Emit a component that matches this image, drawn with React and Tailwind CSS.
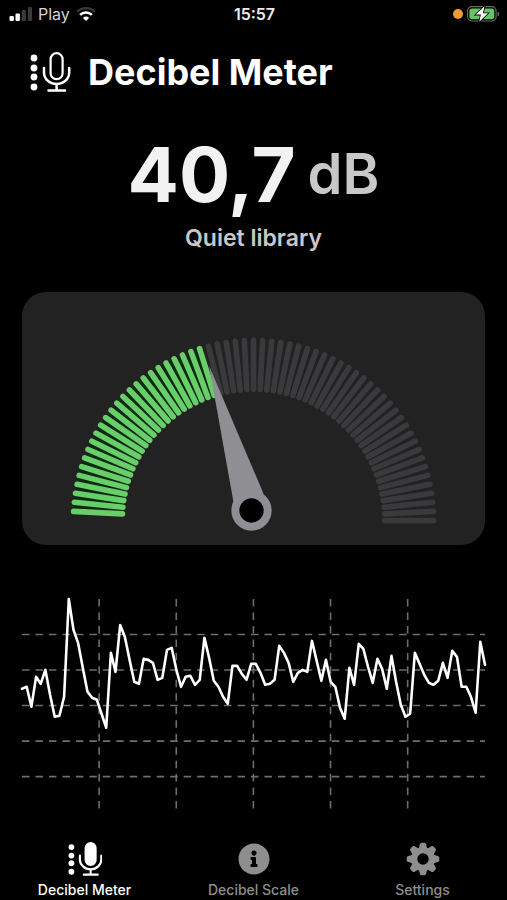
import React, { useState } from 'react';
import { FaInfoCircle } from 'react-icons/fa';

const TICK_COUNT = 62;
const ACTIVE_TICKS = 25;

// Levels measured down from the top of the chart, one per sample
const SAMPLES = [
  90, 88, 108, 78, 85, 71, 96, 118, 117, 98,
  0, 31, 44, 69, 93, 99, 101, 115, 129, 54,
  73, 26, 38, 61, 83, 85, 60, 61, 64, 81,
  79, 51, 49, 71, 88, 78, 77, 86, 81, 39,
  59, 82, 88, 98, 105, 67, 67, 75, 81, 65,
  65, 74, 86, 85, 81, 47, 54, 64, 83, 74,
  71, 73, 42, 62, 82, 61, 83, 88, 109, 120,
  69, 86, 45, 50, 68, 84, 60, 70, 90, 57,
  83, 106, 118, 115, 54, 65, 76, 84, 86, 82,
  64, 79, 52, 58, 88, 88, 98, 114, 43, 66,
];

const CHART_WIDTH = 464;
const CHART_HEIGHT = 214;

function MicIcon({ filled, className }) {
  return (
    <svg viewBox="0 0 40 40" className={className} fill="none" stroke="currentColor" aria-hidden="true">
      {[6, 16, 25, 35].map((y) => (
        <circle key={y} cx="4" cy={y} r="3.4" fill="currentColor" stroke="none" />
      ))}
      <rect x="20.6" y="1.2" width="12" height="26" rx="6" strokeWidth="2.2" fill={filled ? 'currentColor' : 'none'} />
      <path d="M14 16v4.5a12.6 11.6 0 0 0 25.2 0V16M26.6 32v6M18.5 38.4h16.5" strokeWidth="2.5" strokeLinecap="round" />
    </svg>
  );
}

function GearIcon({ className }) {
  return (
    <svg viewBox="0 0 34 34" className={className} fill="none" stroke="currentColor" aria-hidden="true">
      <circle cx="17" cy="17" r="8.9" strokeWidth="6.4" />
      {[0, 45, 90, 135, 180, 225, 270, 315].map((angle) => (
        <path
          key={angle}
          d="M12.8 6.8l1.1-4.6q.4-1.5 1.8-1.5h2.6q1.4 0 1.8 1.5l1.1 4.6z"
          fill="currentColor"
          stroke="none"
          transform={`rotate(${angle} 17 17)`}
        />
      ))}
    </svg>
  );
}

function StatusBar() {
  return (
    <div className="grid grid-cols-3 items-center h-7 pl-2 pr-1.5">
      <div className="flex items-center gap-1.5">
        <svg viewBox="0 0 24 16" className="w-6 h-4" fill="currentColor" aria-hidden="true">
          <rect x="1.5" y="10" width="4.4" height="5" rx="1" />
          <rect x="7.5" y="7.5" width="4.4" height="7.5" rx="1" />
          <rect x="13.9" y="4" width="4" height="11" rx="1" fill="#3a3a3c" />
          <rect x="20" y="1" width="4" height="14" rx="1" fill="#3a3a3c" />
        </svg>
        <span className="text-base leading-5 text-[#d4d4d4]">Play</span>
        <svg viewBox="0 0 20 15" className="w-5 h-4" fill="none" stroke="currentColor" aria-hidden="true">
          <path d="M1.2 5.3a12.5 12.5 0 0 1 17.6 0" strokeWidth="2.2" stroke="#3a3a3c" />
          <path d="M4.1 8.4a8.4 8.4 0 0 1 11.8 0" strokeWidth="2.6" />
          <path d="M10 14.6l-3.1-3.2a4.4 4.4 0 0 1 6.2 0z" fill="currentColor" stroke="none" />
        </svg>
      </div>
      <span className="text-center text-base leading-5 font-semibold text-[#ececec]">15:57</span>
      <div className="flex items-center justify-end gap-0.5">
        <span className="w-2.5 h-2.5 rounded-full bg-[#f09a37]" />
        <svg viewBox="0 0 34 18" className="w-9 h-4.5" fill="none" aria-hidden="true">
          <rect x="1.6" y="1.6" width="28.5" height="14.4" rx="4.4" stroke="#6b6b6b" strokeWidth="1.1" />
          <rect x="3.4" y="3.4" width="24.9" height="10.8" rx="2.6" fill="#65c466" />
          <path d="M31.6 6.4q1.8.8 1.8 2.5t-1.8 2.5z" fill="#6b6b6b" />
          <path d="M18.5 1.2L9.8 9.6h5.1l-1.6 7.2 8.7-8.6h-5.1z" fill="white" stroke="black" strokeWidth="1.6" paintOrder="stroke" />
        </svg>
      </div>
    </div>
  );
}

function Gauge() {
  const ticks = Array.from({ length: TICK_COUNT }, (_, i) => i + 1);

  return (
    <div className="bg-[#222222] rounded-3xl overflow-hidden">
      <svg viewBox="0 0 464 254" className="block w-full" role="img" aria-label="Sound level gauge">
        {/* Shade behind the active ticks */}
        <path
          d="M76.1 220.5A156 156 0 0 1 183.4 80.7"
          fill="none"
          stroke="#0b2a10"
          strokeWidth="48"
        />
        {ticks.map((n) => (
          <line
            key={n}
            x1="51.5"
            y1="229"
            x2="100.5"
            y2="229"
            stroke={n <= ACTIVE_TICKS ? '#68ce6a' : '#3a3a3c'}
            strokeWidth="5.6"
            strokeLinecap="round"
            transform={`rotate(${(n * 180) / TICK_COUNT} 232 229)`}
          />
        ))}
        {/* Needle */}
        <path d="M187.5 74L212 211L230 219L242 202z" fill="#8e8e93" />
        <circle cx="230" cy="219" r="16.2" fill="black" stroke="#8e8e93" strokeWidth="8" />
      </svg>
    </div>
  );
}

function HistoryChart() {
  const step = CHART_WIDTH / (SAMPLES.length - 1);
  const points = SAMPLES.map((y, i) => `${(i * step).toFixed(1)},${y}`).join(' ');
  const lines = [1, 2, 3, 4, 5];

  return (
    <svg viewBox="0 0 464 214" className="block w-full overflow-visible" fill="none" role="img" aria-label="Level history">
      <g stroke="#6e6e6e" strokeWidth="1.6" strokeDasharray="7.5 6">
        {lines.map((n) => (
          <line key={`h${n}`} x1="0" x2={CHART_WIDTH} y1={n * 35.6} y2={n * 35.6} />
        ))}
        {lines.map((n) => (
          <line key={`v${n}`} y1="0" y2={CHART_HEIGHT - 3} x1={n * 77.3} x2={n * 77.3} />
        ))}
      </g>
      <polyline points={points} stroke="white" strokeWidth="2.6" strokeLinejoin="round" strokeLinecap="round" />
    </svg>
  );
}

const TABS = [
  { id: 'meter', label: 'Decibel Meter', icon: <MicIcon filled className="w-8.5 h-8.5" /> },
  { id: 'scale', label: 'Decibel Scale', icon: <FaInfoCircle className="w-8 h-8" /> },
  { id: 'settings', label: 'Settings', icon: <GearIcon className="w-8.5 h-8.5" /> },
];

export default function App() {
  const [activeTab, setActiveTab] = useState('meter');

  return (
    <div className="min-h-screen flex flex-col bg-black text-white font-['Inter',sans-serif]">
      <StatusBar />

      {/* Header */}
      <header className="flex items-center gap-4 px-7 pt-6">
        <MicIcon className="w-11 h-10" />
        <h1 className="text-4xl leading-10 font-bold">Decibel Meter</h1>
      </header>

      {/* Current reading */}
      <section className="flex flex-col items-center gap-2 pt-[42px]">
        <p className="flex items-center gap-3 leading-20">
          <span className="text-[76px] font-bold text-[#f2f2f2]">40,7</span>
          <span className="text-[56px] font-semibold text-[#c8c8c8]">dB</span>
        </p>
        <p className="text-[23px] leading-8 font-semibold text-[#c8c8c8]">Quiet library</p>
      </section>

      <main className="px-5.5 pt-[38px]">
        <Gauge />
        <div className="pt-[54px]">
          <HistoryChart />
        </div>
      </main>

      {/* Tab bar */}
      <nav className="mt-auto grid grid-cols-3">
        {TABS.map((tab) => (
          <button
            key={tab.id}
            type="button"
            onClick={() => setActiveTab(tab.id)}
            className={`flex flex-col items-center gap-[3px] text-sm leading-5 font-medium ${
              activeTab === tab.id ? 'text-white' : 'text-[#8e8e8e]'
            }`}
          >
            <span className="flex h-9 items-center">{tab.icon}</span>
            {tab.label}
          </button>
        ))}
      </nav>
    </div>
  );
}
